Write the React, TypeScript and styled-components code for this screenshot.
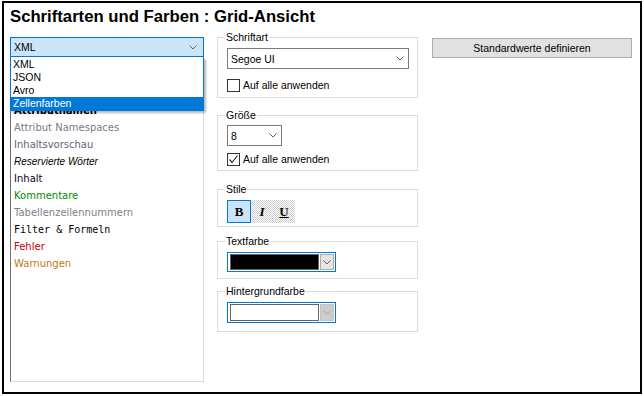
import React from 'react';
import styled, { createGlobalStyle } from 'styled-components';

const GlobalStyle = createGlobalStyle`
  body {
    margin: 0;
    background: #fff;
    font-family: 'Liberation Sans', Arial, sans-serif;
  }
`;

const Frame = styled.div`
  box-sizing: border-box;
  width: 640px;
  height: 393px;
  margin: 1px 0 0 2px;
  border: 2px solid #000;
  padding-left: 6px;
  background: #fff;
`;

const Title = styled.h1`
  margin: 0;
  height: 27px;
  line-height: 27px;
  font-size: 16.7px;
  font-weight: 700;
  color: #000;
`;

const Body = styled.div`
  display: flex;
  align-items: flex-start;
`;

const LeftColumn = styled.div`
  position: relative;
  width: 194px;
  margin-top: 7px;
`;

const TypeCombo = styled.div`
  box-sizing: border-box;
  display: flex;
  align-items: center;
  justify-content: space-between;
  height: 20px;
  padding: 0 6px 0 3px;
  border: 1px solid #0078d7;
  background: #cce4f7;
  font-size: 10.5px;
`;

const Popup = styled.div`
  position: absolute;
  top: 20px;
  left: 0;
  box-sizing: border-box;
  width: 194px;
  padding-top: 1px;
  border: 1px solid #0078d7;
  border-top: 0;
  background: #fff;
  box-shadow: 2px 2px 2px rgba(0, 0, 0, 0.28);
  z-index: 2;
`;

const PopupItem = styled.div<{ $selected?: boolean }>`
  height: 13px;
  line-height: 13px;
  padding-left: 2px;
  font-size: 10.5px;
  color: ${(p) => (p.$selected ? '#fff' : '#000')};
  background: ${(p) => (p.$selected ? '#0078d7' : 'transparent')};
`;

// the first entries sit under the open popup; only the tail of "Attributnamen" shows
const ListBox = styled.div`
  box-sizing: border-box;
  height: 322px;
  margin-top: 3px;
  padding: 41px 0 0 3px;
  border: 1px solid #d9d9d9;
  border-left-color: #6e6e6e;
  background: #fff;
`;

type Face = 'verdana' | 'sans' | 'mono';

const ListItem = styled.div<{ $color: string; $bold?: boolean; $italic?: boolean; $face?: Face }>`
  height: 17px;
  line-height: 17px;
  white-space: nowrap;
  color: ${(p) => p.$color};
  font-weight: ${(p) => (p.$bold ? 700 : 400)};
  font-style: ${(p) => (p.$italic ? 'italic' : 'normal')};
  font-size: 10px;
  font-family: ${(p) =>
    p.$face === 'mono'
      ? "'DejaVu Sans Mono', monospace"
      : p.$face === 'sans'
      ? "'Liberation Sans', Arial, sans-serif"
      : "'DejaVu Sans', Verdana, sans-serif"};
`;

const RightColumn = styled.div`
  width: 201px;
  margin-left: 13px;
`;

const Group = styled.fieldset<{ $top: number; $bottom: number }>`
  margin: ${(p) => p.$top}px 0 0 0;
  padding: 0 9px ${(p) => p.$bottom}px 9px;
  min-width: 0;
  border: 1px solid #dcdcdc;
`;

const Legend = styled.legend`
  margin-left: -2px;
  padding: 0 1px;
  height: 14px;
  line-height: 14px;
  font-size: 10.5px;
  color: #000;
`;

const Select = styled.div<{ $width: number; $top: number }>`
  box-sizing: border-box;
  display: flex;
  align-items: center;
  justify-content: space-between;
  width: ${(p) => p.$width}px;
  height: 21px;
  margin-top: ${(p) => p.$top}px;
  padding: 0 4px 0 3px;
  border: 1px solid #7a7a7a;
  background: #fff;
  font-size: 10.5px;
`;

const CheckRow = styled.label<{ $top: number }>`
  display: flex;
  align-items: center;
  height: 13px;
  margin-top: ${(p) => p.$top}px;
  font-size: 10.5px;
  line-height: 13px;
`;

const CheckBox = styled.span`
  box-sizing: border-box;
  display: flex;
  align-items: center;
  justify-content: center;
  width: 13px;
  height: 13px;
  margin-right: 3px;
  border: 1px solid #333;
  background: #fff;
`;

const Toolbar = styled.div`
  display: flex;
  width: 68px;
  height: 23px;
  margin-top: 4px;
  background-color: #fff;
  background-image: repeating-conic-gradient(#cfcfcf 0 25%, #fff 0 50%);
  background-size: 2px 2px;
`;

const StyleButton = styled.span<{ $pressed?: boolean; $italic?: boolean; $underline?: boolean }>`
  box-sizing: border-box;
  display: flex;
  align-items: center;
  justify-content: center;
  width: ${(p) => (p.$pressed ? 24 : 22)}px;
  height: 23px;
  border: 1px solid ${(p) => (p.$pressed ? '#0078d7' : 'transparent')};
  background: ${(p) => (p.$pressed ? '#cce4f7' : 'transparent')};
  font-family: 'Liberation Serif', 'Times New Roman', serif;
  font-weight: 700;
  font-size: 13px;
  font-style: ${(p) => (p.$italic ? 'italic' : 'normal')};
  text-decoration: ${(p) => (p.$underline ? 'underline' : 'none')};
  color: #000;
`;

const ColorPicker = styled.div<{ $height: number }>`
  box-sizing: border-box;
  display: flex;
  width: 109px;
  height: ${(p) => p.$height}px;
  margin-top: 4px;
  padding: 1px;
  border: 1px solid #0078d7;
  background: #fff;
`;

const Swatch = styled.span<{ $fill: string }>`
  box-sizing: border-box;
  width: 89px;
  margin-left: 1px;
  border: 1px solid #646464;
  background: ${(p) => p.$fill};
`;

const PickerArrow = styled.span<{ $disabled?: boolean }>`
  box-sizing: border-box;
  display: flex;
  align-items: center;
  justify-content: center;
  width: 14px;
  margin-left: auto;
  border: 1px solid ${(p) => (p.$disabled ? '#c4c4c4' : '#adadad')};
  background: ${(p) => (p.$disabled ? '#cccccc' : '#e5e5e5')};
`;

const DefaultsButton = styled.button`
  box-sizing: border-box;
  width: 200px;
  height: 20px;
  margin: 8px 0 0 14px;
  padding: 0;
  border: 1px solid #adadad;
  background: #e1e1e1;
  font-family: 'Liberation Sans', Arial, sans-serif;
  font-size: 10.5px;
  color: #000;
`;

const Chevron = ({ color = '#606060' }: { color?: string }) => (
  <svg width="8" height="5" viewBox="0 0 8 5">
    <polyline points="0.5,0.5 4,4 7.5,0.5" fill="none" stroke={color} strokeWidth="1" />
  </svg>
);

const Tick = () => (
  <svg width="11" height="11" viewBox="0 0 11 11">
    <polyline points="1.5,5.5 4,8.5 9.5,1.5" fill="none" stroke="#333" strokeWidth="1.2" />
  </svg>
);

const types = ['XML', 'JSON', 'Avro', 'Zellenfarben'];

const entries: { label: string; color: string; bold?: boolean; italic?: boolean; face?: Face }[] = [
  { label: 'Attributnamen', color: '#000', bold: true },
  { label: 'Attribut Namespaces', color: '#7a7a82' },
  { label: 'Inhaltsvorschau', color: '#66627a' },
  { label: 'Reservierte Wörter', color: '#000', italic: true, face: 'sans' },
  { label: 'Inhalt', color: '#10002a' },
  { label: 'Kommentare', color: '#008a00' },
  { label: 'Tabellenzeilennummern', color: '#80808a' },
  { label: 'Filter & Formeln', color: '#000', face: 'mono' },
  { label: 'Fehler', color: '#c00000' },
  { label: 'Warnungen', color: '#c07818' },
];

export default function App() {
  return (
    <>
      <GlobalStyle />
      <Frame>
        <Title>Schriftarten und Farben : Grid-Ansicht</Title>
        <Body>
          <LeftColumn>
            <TypeCombo>
              <span>XML</span>
              <Chevron />
            </TypeCombo>
            <ListBox>
              {entries.map((e) => (
                <ListItem key={e.label} $color={e.color} $bold={e.bold} $italic={e.italic} $face={e.face}>
                  {e.label}
                </ListItem>
              ))}
            </ListBox>
            <Popup>
              {types.map((t) => (
                <PopupItem key={t} $selected={t === 'Zellenfarben'}>
                  {t}
                </PopupItem>
              ))}
            </Popup>
          </LeftColumn>

          <RightColumn>
            <Group $top={0} $bottom={5}>
              <Legend>Schriftart</Legend>
              <Select $width={182} $top={4}>
                <span>Segoe UI</span>
                <Chevron />
              </Select>
              <CheckRow $top={10}>
                <CheckBox />
                Auf alle anwenden
              </CheckRow>
            </Group>

            <Group $top={10} $bottom={4}>
              <Legend>Größe</Legend>
              <Select $width={55} $top={3}>
                <span>8</span>
                <Chevron />
              </Select>
              <CheckRow $top={7}>
                <CheckBox>
                  <Tick />
                </CheckBox>
                Auf alle anwenden
              </CheckRow>
            </Group>

            <Group $top={11} $bottom={3}>
              <Legend>Stile</Legend>
              <Toolbar>
                <StyleButton $pressed>B</StyleButton>
                <StyleButton $italic>I</StyleButton>
                <StyleButton $underline>U</StyleButton>
              </Toolbar>
            </Group>

            <Group $top={7} $bottom={6}>
              <Legend>Textfarbe</Legend>
              <ColorPicker $height={20}>
                <Swatch $fill="#000" />
                <PickerArrow>
                  <Chevron />
                </PickerArrow>
              </ColorPicker>
            </Group>

            <Group $top={5} $bottom={8}>
              <Legend>Hintergrundfarbe</Legend>
              <ColorPicker $height={21}>
                <Swatch $fill="#fff" />
                <PickerArrow $disabled>
                  <Chevron color="#a8a8a8" />
                </PickerArrow>
              </ColorPicker>
            </Group>
          </RightColumn>

          <DefaultsButton>Standardwerte definieren</DefaultsButton>
        </Body>
      </Frame>
    </>
  );
}
